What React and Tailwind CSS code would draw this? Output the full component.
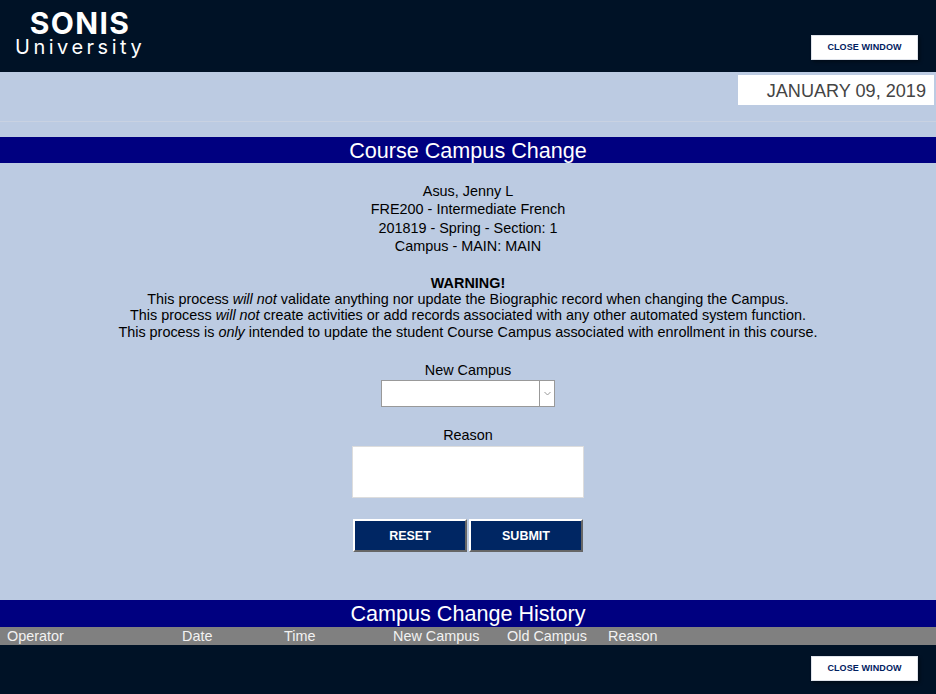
import React from 'react';

const CloseButton = () => (
  <button className="w-[107px] h-[25px] bg-white border border-[#dfe3ea] shadow-[2px_2px_3px_rgba(0,0,0,0.35)] text-[9px] font-bold tracking-[0.1px] text-[#002060] flex items-center justify-center pt-[1px]">
    CLOSE WINDOW
  </button>
);

const ActionButton = ({ children }) => (
  <button className="w-[114px] h-[33px] bg-[#002663] border-2 border-t-white border-l-white border-r-[#666666] border-b-[#666666] text-white text-[12.5px] font-bold flex items-center justify-center pt-[3px]">
    {children}
  </button>
);

const columns = [
  { label: 'Operator', width: 'w-[175px]' },
  { label: 'Date', width: 'w-[102px]' },
  { label: 'Time', width: 'w-[109px]' },
  { label: 'New Campus', width: 'w-[114px]' },
  { label: 'Old Campus', width: 'w-[101px]' },
  { label: 'Reason', width: 'w-[60px]' }
];

const App = () => {
  return (
    <div className="w-[936px] h-[694px] overflow-hidden flex flex-col bg-[#bccbe2] text-black font-['Liberation_Sans',Arial,sans-serif] text-[14.4px]">
      {/* Header */}
      <header className="h-[72px] shrink-0 bg-[#001226] flex justify-between pl-[15px] pr-[18px]">
        <div className="flex flex-col items-center pt-[10px] text-white font-['Inter',sans-serif]">
          <div className="text-[30px] font-bold leading-[27px] tracking-[1.4px]">SONIS</div>
          <div className="text-[20px] leading-[21px] tracking-[3.5px]">University</div>
        </div>
        <div className="pt-[35px]">
          <CloseButton />
        </div>
      </header>

      {/* Date */}
      <div className="h-[50px] shrink-0 border-b border-[#c9d2e2] flex justify-end items-start pt-[3px] pr-[2px]">
        <div className="w-[196px] h-[30px] bg-white text-[#444444] text-[18.1px] flex items-center justify-end pr-[8px] pt-[3px]">
          JANUARY 09, 2019
        </div>
      </div>

      <h1 className="mt-[15px] h-[26px] shrink-0 bg-[#000080] text-white text-[21.6px] leading-[26px] pt-[1px] text-center">
        Course Campus Change
      </h1>

      {/* Course details */}
      <div className="mt-[19px] text-center leading-[18.4px]">
        <div>Asus, Jenny L</div>
        <div>FRE200 - Intermediate French</div>
        <div>201819 - Spring - Section: 1</div>
        <div>Campus - MAIN: MAIN</div>
      </div>

      {/* Warning */}
      <div className="mt-[19px] text-center leading-[16.3px]">
        <div className="font-bold">WARNING!</div>
        <div>This process <i>will not</i> validate anything nor update the Biographic record when changing the Campus.</div>
        <div>This process <i>will not</i> create activities or add records associated with any other automated system function.</div>
        <div>This process is <i>only</i> intended to update the student Course Campus associated with enrollment in this course.</div>
      </div>

      {/* Form */}
      <div className="mt-[21px] flex flex-col items-center">
        <label className="leading-[18px]">New Campus</label>
        <div className="mt-[1px] w-[174px] h-[27px] bg-white border border-[#999999] flex justify-end">
          <div className="w-[15px] border-l border-[#999999] flex items-center justify-center">
            <svg width="7" height="5" viewBox="0 0 7 5" fill="none" stroke="#999999" strokeWidth="1">
              <path d="M0.5 1 L3.5 4 L6.5 1" />
            </svg>
          </div>
        </div>
        <label className="mt-[19px] leading-[18px]">Reason</label>
        <div className="mt-[2px] w-[232px] h-[52px] bg-white border border-[#dddddd]" />
        <div className="mt-[21px] flex gap-[2px]">
          <ActionButton>RESET</ActionButton>
          <ActionButton>SUBMIT</ActionButton>
        </div>
      </div>

      <div className="flex-1" />

      <h2 className="h-[27px] shrink-0 bg-[#000080] text-white text-[21.6px] leading-[27px] text-center">
        Campus Change History
      </h2>
      <div className="h-[18px] shrink-0 bg-[#808080] text-[#f2f2f2] leading-[18px] flex pl-[7px]">
        {columns.map((col) => (
          <div key={col.label} className={col.width}>{col.label}</div>
        ))}
      </div>

      {/* Footer */}
      <footer className="h-[49px] shrink-0 bg-[#001226] flex justify-end pt-[11px] pr-[18px]">
        <CloseButton />
      </footer>
    </div>
  );
};

export default App;
